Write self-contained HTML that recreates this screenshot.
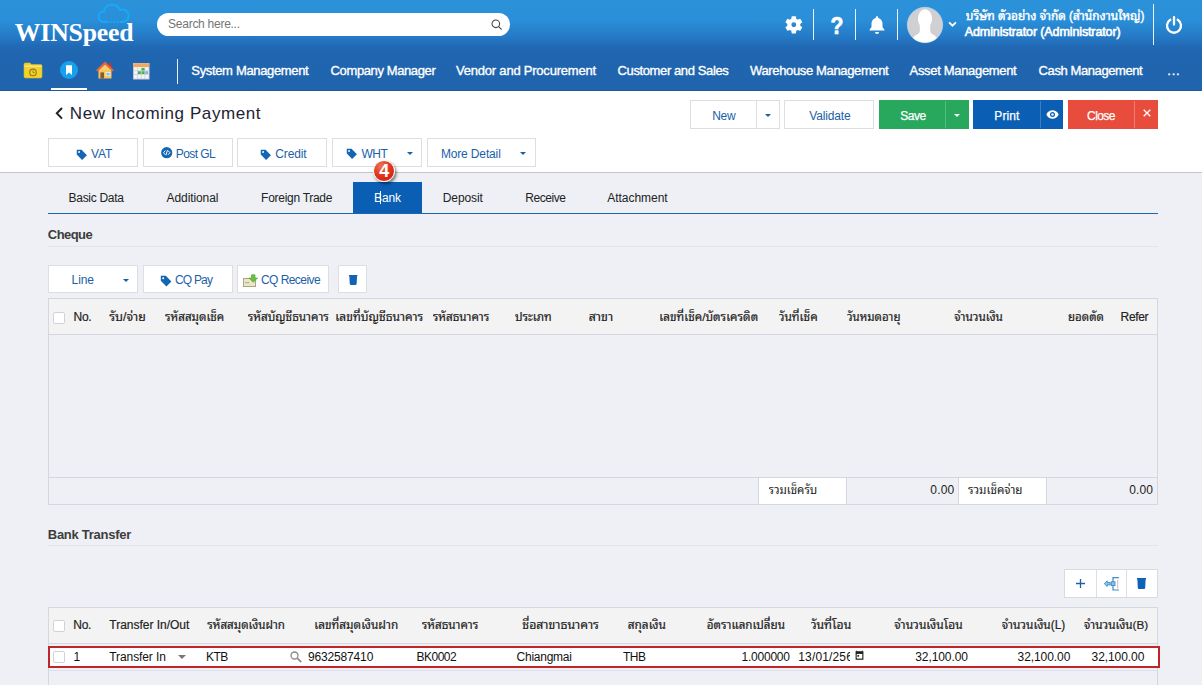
<!DOCTYPE html>
<html lang="th">
<head>
<meta charset="utf-8">
<title>New Incoming Payment</title>
<style>
*{box-sizing:border-box;margin:0;padding:0}
html,body{width:1202px;height:685px;overflow:hidden;background:#eef0f5}
body{font-family:"Liberation Sans","Noto Sans Thai Looped","Sarabun","Loma","Noto Sans Thai",sans-serif;font-size:12px;color:#222;position:relative}
.a{position:absolute}
svg.a{display:block;overflow:visible}
.t{position:absolute;white-space:nowrap;line-height:20px;height:20px}
.t.th{overflow-x:clip;overflow-y:visible}
#hdr{position:absolute;left:0;top:0;width:1202px;height:91px;border-bottom:1px solid #1b5899;background:linear-gradient(#2b92da 0px,#2a8fd8 20px,#257bc8 36px,#216ab5 46px,#2065af 54px,#2064ae 91px)}
#tb{position:absolute;left:0;top:91px;width:1202px;height:82px;background:#fff;border-bottom:1px solid #c6c6c6}
.vd{position:absolute;width:1px;background:#fff;opacity:.9}
.btn{position:absolute;height:29px;border:1px solid #dcdee2;background:#fff}
.btn.g{background:#27a85d;border-color:#27a85d}
.btn.b{background:#0a5fb4;border-color:#0a5fb4}
.btn.r{background:#e74c3c;border-color:#e74c3c}
.sp{position:absolute;width:1px;height:27px;top:101px;background:#dcdee2}
.car{position:absolute;width:0;height:0;border-left:3.5px solid transparent;border-right:3.5px solid transparent;border-top:3.5px solid #1a5fa8}
.hr{position:absolute;left:48px;width:1110px;height:1px;background:#e3e5ea}
.ln{position:absolute;background:#d4d7dd}
.cb{position:absolute;width:12px;height:12px;background:#fff;border:1px solid #cfd2d7;border-radius:2px}
</style>
</head>
<body>
<div id="hdr"></div>
<!-- cloud over logo -->
<svg class="a" style="left:96px;top:2px" width="36" height="24" viewBox="0 0 36 24">
 <path d="M11.500 19.800 H8.500 C4.800 19.800 2.600 17.300 2.600 14.400 C2.600 11.400 5 9.300 8 9.600 C8.300 5.400 11.700 2.600 16 2.600 C19.800 2.600 22.700 4.800 23.900 8 C24.700 7.700 25.500 7.600 26.300 7.600 C30 7.600 32.700 10.300 32.700 13.700 C32.700 17.200 30 19.800 26.600 19.800 H24.500" fill="none" stroke="#17a9f3" stroke-width="2.200" stroke-linecap="round" stroke-linejoin="round"/>
 <g fill="#17a9f3"><circle cx="14.600" cy="19.900" r="1.150"/><circle cx="18" cy="19.900" r="1.150"/><circle cx="21.400" cy="19.900" r="1.150"/></g>
</svg>
<div class="a" style="left:157px;top:13px;width:353px;height:23px;border-radius:12px;background:#fff"></div>
<svg class="a" style="left:490px;top:18px" width="14" height="14" viewBox="0 0 14 14"><circle cx="5.800" cy="5.800" r="3.800" fill="none" stroke="#444" stroke-width="1.050"/><path d="M8.600 8.600 L11.300 11.100" stroke="#444" stroke-width="1.200" stroke-linecap="round"/></svg>

<!-- quick icons -->
<svg class="a" style="left:23px;top:61px" width="20" height="18" viewBox="0 0 20 18">
 <path d="M1 3.200 C1 2.400 1.500 2 2.200 2 H7 L8.600 3.600 H17.600 C18.400 3.600 19 4.100 19 4.900 V15.600 C19 16.400 18.400 17 17.600 17 H2.400 C1.600 17 1 16.400 1 15.600 Z" fill="#f1d12e" stroke="#d9b81f" stroke-width=".6"/>
 <rect x="1.400" y="4.600" width="17.200" height="1.200" fill="#f8ea9a"/>
 <circle cx="10" cy="11.400" r="3.300" fill="#f1d12e" stroke="#9a7a0e" stroke-width="1.100"/><path d="M10 9.600 V11.600 H11.600" fill="none" stroke="#9a7a0e" stroke-width="1"/>
</svg>
<svg class="a" style="left:60px;top:61px" width="18" height="18" viewBox="0 0 18 18"><circle cx="9" cy="9" r="9" fill="#18a0ec"/><path d="M6 4.200 H12 V14 L9 11.600 L6 14 Z" fill="#fff"/></svg>
<svg class="a" style="left:95px;top:60px" width="20" height="20" viewBox="0 0 20 20">
 <rect x="14" y="3" width="2.400" height="5" fill="#c0392b"/>
 <path d="M3.500 10 H16.500 V18.500 H3.500 Z" fill="#f6c458"/>
 <path d="M10 1.600 L19 10.200 L17.400 11.400 L10 4.600 L2.600 11.400 L1 10.200 Z" fill="#ef6238"/>
 <path d="M10 4.600 L16.500 10.600 H3.500 Z" fill="#f8cc66"/>
 <rect x="5.400" y="12.400" width="3.600" height="6.100" fill="#8a5a2b"/>
 <rect x="11" y="12.400" width="4" height="3.400" fill="#7ec3ea" stroke="#fff" stroke-width=".6"/>
</svg>
<svg class="a" style="left:133px;top:63px" width="16.500" height="16.500" viewBox="0 0 18 18">
 <rect x=".5" y=".5" width="17" height="17" fill="#f4f5f7" stroke="#c5c8cf"/>
 <rect x=".5" y=".5" width="17" height="4" fill="#f0a95e"/>
 <path d="M1 8.500 H17 M1 12.500 H17 M5 5 V17 M9 5 V17 M13 5 V17" stroke="#c3c9d4" stroke-width=".8"/>
 <rect x="9.400" y="5.400" width="3.200" height="2.800" fill="#4caf50"/><rect x="5.400" y="9" width="3.200" height="3" fill="#4caf50"/><rect x="9.400" y="9" width="3.200" height="3" fill="#4caf50"/><rect x="13.400" y="9" width="3" height="3" fill="#7fb3e6"/>
</svg>
<div class="a" style="left:51px;top:88px;width:36px;height:2px;background:#fff"></div>
<div class="vd" style="left:177px;top:59px;height:25px"></div>

<!-- right header icons -->
<svg class="a" style="left:783.200px;top:14.100px" width="21.600" height="21.600" viewBox="0 0 24 24"><path fill="#fff" d="M19.140 12.940c.04-.3.06-.61.06-.94 0-.32-.02-.64-.07-.94l2.030-1.580a.49.49 0 0 0 .12-.61l-1.920-3.320a.49.49 0 0 0-.59-.22l-2.390.96c-.5-.38-1.030-.7-1.620-.94l-.36-2.540a.48.48 0 0 0-.48-.41h-3.840c-.24 0-.43.17-.47.41l-.36 2.540c-.59.24-1.130.57-1.620.94l-2.390-.96a.49.49 0 0 0-.59.22L2.740 8.870c-.12.21-.08.47.12.61l2.030 1.580c-.05.3-.09.63-.09.94s.02.64.07.94l-2.030 1.580a.49.49 0 0 0-.12.61l1.920 3.320c.12.22.37.29.59.22l2.390-.96c.5.38 1.030.7 1.620.94l.36 2.540c.05.24.24.41.48.41h3.840c.24 0 .44-.17.47-.41l.36-2.540c.59-.24 1.130-.56 1.620-.94l2.390.96c.22.08.47 0 .59-.22l1.920-3.320c.12-.22.07-.47-.12-.61l-2.010-1.580zM12 14.700A2.700 2.700 0 1 1 12 9.300a2.700 2.700 0 0 1 0 5.400z"/></svg>
<div class="vd" style="left:813px;top:9px;height:31px"></div>
<div class="a" style="left:827.200px;top:11.900px;width:20px;text-align:center;font-weight:bold;font-size:24.500px;line-height:28px;color:#fff;-webkit-text-stroke:.7px #fff;transform:scaleX(.86)">?</div>
<div class="vd" style="left:855px;top:9px;height:31px"></div>
<svg class="a" style="left:868px;top:15px" width="18" height="20" viewBox="0 0 18 20"><path fill="#fff" d="M9 1.200c.7 0 1.200.5 1.200 1.200v.5c2.600.6 4.300 2.800 4.300 5.600v3.600l1.900 2.600v.9H1.600v-.9l1.900-2.600V8.500c0-2.800 1.700-5 4.300-5.600v-.5c0-.7.5-1.200 1.200-1.200zM7 17h4a2 2 0 0 1-4 0z"/></svg>
<div class="vd" style="left:897px;top:9px;height:31px"></div>
<svg class="a" style="left:907px;top:7px" width="36" height="36" viewBox="0 0 36 36">
 <defs><clipPath id="av"><circle cx="18" cy="18" r="17.600"/></clipPath></defs>
 <circle cx="18" cy="18" r="17.700" fill="#d0cfd1" stroke="#b9d9f2" stroke-width=".7"/>
 <g clip-path="url(#av)" fill="#fff"><ellipse cx="18" cy="11.800" rx="7.100" ry="9.500"/><path d="M12.800 17 V24.200 C12.800 26.200 10.200 27.200 7.800 29 C5.700 30.600 4.600 33 4 37 H32 C31.400 33 30.300 30.600 28.200 29 C25.800 27.200 23.200 26.200 23.200 24.200 V17 Z"/></g>
</svg>
<svg class="a" style="left:947.600px;top:21.200px" width="9" height="7" viewBox="0 0 9 7"><path d="M1.100 1.300 L4.500 4.700 L7.900 1.300" fill="none" stroke="#fff" stroke-width="1.900"/></svg>
<div class="vd" style="left:1153px;top:4px;height:41px"></div>
<svg class="a" style="left:1164px;top:15px" width="20" height="20" viewBox="0 0 20 20"><path d="M6.300 4.800 A7 7 0 1 0 13.700 4.800" fill="none" stroke="#fff" stroke-width="2.300" stroke-linecap="round"/><path d="M10 2.200 V9.600" stroke="#fff" stroke-width="2.300" stroke-linecap="round"/></svg>

<!-- toolbar -->
<div id="tb"></div>
<svg class="a" style="left:54px;top:106px" width="10" height="14" viewBox="0 0 10 14"><path d="M8 2 L2.800 7.300 L8 12.600" fill="none" stroke="#222" stroke-width="2"/></svg>

<div class="btn" style="left:690px;top:100px;width:90px"></div><div class="sp" style="left:756px"></div><i class="car" style="left:765px;top:114px"></i>
<div class="btn" style="left:784px;top:100px;width:90px"></div>
<div class="btn g" style="left:879px;top:100px;width:90px"></div><div class="sp" style="left:945px;background:#52bd80"></div><i class="car" style="left:953.500px;top:114px;border-top-color:#fff"></i>
<div class="btn b" style="left:973px;top:100px;width:90px"></div><div class="sp" style="left:1040px;background:#3a7fc6"></div>
<svg class="a" style="left:1046px;top:110px" width="13" height="9" viewBox="0 0 13 9"><path d="M.3 4.500 C1.800 1.600 4 .3 6.500 .3 S11.200 1.600 12.700 4.500 C11.200 7.400 9 8.700 6.500 8.700 S1.800 7.400 .3 4.500Z" fill="#fff"/><circle cx="6.500" cy="4.500" r="2.500" fill="#0a5fb4"/><circle cx="6.500" cy="4.500" r="1.200" fill="#fff"/></svg>
<div class="btn r" style="left:1068px;top:100px;width:90px"></div><div class="sp" style="left:1134px;background:#ef7f73"></div>
<svg class="a" style="left:1142.500px;top:109px" width="8" height="8" viewBox="0 0 8 8"><path d="M.7 .7 L7.300 7.300 M7.300 .7 L.7 7.300" stroke="#fff" stroke-width="1.300"/></svg>

<!-- second row buttons -->
<div class="btn" style="left:48px;top:138px;width:90px"></div>
<div class="btn" style="left:143px;top:138px;width:90px"></div>
<div class="btn" style="left:237px;top:138px;width:90px"></div>
<div class="btn" style="left:332px;top:138px;width:90px"></div><i class="car" style="left:406.500px;top:152px"></i>
<div class="btn" style="left:427px;top:138px;width:109px"></div><i class="car" style="left:520.300px;top:152px"></i>
<svg class="a" style="left:76.300px;top:148.500px" width="11.500" height="11.500" viewBox="0 0 12 12"><path d="M.8 .8 H5.800 L11.400 6.400 L6.400 11.400 L.8 5.800 Z" fill="#1565b5"/><circle cx="3.200" cy="3.200" r="1" fill="#fff"/></svg>
<svg class="a" style="left:161px;top:147px" width="11.400" height="11.400" viewBox="0 0 12 12"><circle cx="6" cy="6" r="5.900" fill="#1565b5"/><path d="M4.600 3.800 L2.600 6 L4.600 8.200 M7.400 3.800 L9.400 6 L7.400 8.200 M6.800 3.400 L5.200 8.600" fill="none" stroke="#fff" stroke-width="1"/></svg>
<svg class="a" style="left:260.300px;top:148.500px" width="11.500" height="11.500" viewBox="0 0 12 12"><path d="M.8 .8 H5.800 L11.400 6.400 L6.400 11.400 L.8 5.800 Z" fill="#1565b5"/><circle cx="3.200" cy="3.200" r="1" fill="#fff"/></svg>
<svg class="a" style="left:346.200px;top:148.300px" width="11.500" height="11.500" viewBox="0 0 12 12"><path d="M.8 .8 H5.800 L11.400 6.400 L6.400 11.400 L.8 5.800 Z" fill="#1565b5"/><circle cx="3.200" cy="3.200" r="1" fill="#fff"/></svg>

<!-- tabs -->
<div class="a" style="left:353px;top:182px;width:69px;height:32px;background:#0a5fb4"></div>
<div class="a" style="left:48px;top:213px;width:1110px;height:1px;background:#1b67ab"></div>
<div class="a" style="left:380px;top:191px;width:1px;height:13px;background:#fff"></div>
<div class="a" style="left:373px;top:160px;width:22px;height:22px;border-radius:11px;background:radial-gradient(circle at 35% 25%,#ec7358 0,#e2381f 45%,#dd2414 70%,#c5261a 100%);border:1.500px solid #f6f6f6;box-shadow:1.500px 2px 3px rgba(0,0,0,.5);color:#fff;font-weight:bold;font-size:18px;line-height:20.500px;text-align:center;text-indent:.5px">4</div>

<!-- Cheque -->
<div class="hr" style="top:246px"></div>
<div class="btn" style="left:48px;top:265px;width:90px;height:28px"></div><i class="car" style="left:122.500px;top:279px"></i>
<div class="btn" style="left:143px;top:265px;width:90px;height:28px"></div>
<div class="btn" style="left:237px;top:265px;width:92px;height:28px"></div>
<div class="btn" style="left:338px;top:265px;width:29px;height:28px"></div>
<svg class="a" style="left:160px;top:275px" width="12" height="12" viewBox="0 0 12 12"><path d="M.8 .8 H5.800 L11.400 6.400 L6.400 11.400 L.8 5.800 Z" fill="#1565b5"/><circle cx="3.200" cy="3.200" r="1" fill="#fff"/></svg>
<svg class="a" style="left:243px;top:274px" width="15" height="13" viewBox="0 0 15 13"><rect x=".5" y="4.500" width="12" height="8" fill="#ebe6c6" stroke="#aaa57e"/><rect x="2" y="8" width="4.500" height="1.200" fill="#b9b38a"/><path d="M8.500 .8 H12 V4 H14.500 L10.250 8.300 L6 4 H8.500 Z" fill="#6cc13f" stroke="#4a9e2a" stroke-width=".6"/></svg>
<svg class="a" style="left:348.500px;top:274.900px" width="8.400" height="9.900" viewBox="0 0 9 11" preserveAspectRatio="none"><path d="M0 0 H9 V1.500 H8.600 L8.200 9.800 Q8.100 11 7 11 H2 Q.9 11 .8 9.800 L.4 1.500 H0 Z" fill="#0f62b5"/></svg>

<div class="a" style="left:48px;top:298px;width:1110px;height:207px;border:1px solid #d4d7dd"></div>
<div class="a" style="left:49px;top:299px;width:1108px;height:35px;background:#f3f3f3"></div>
<div class="ln" style="left:49px;top:334px;width:1108px;height:1px"></div>
<div class="ln" style="left:49px;top:477px;width:1108px;height:1px"></div>
<div class="cb" style="left:53px;top:311.500px"></div>
<div class="a" style="left:758px;top:478px;width:89px;height:26px;background:#fff;border-left:1px solid #d4d7dd;border-right:1px solid #d4d7dd"></div>
<div class="a" style="left:958px;top:478px;width:89px;height:26px;background:#fff;border-left:1px solid #d4d7dd;border-right:1px solid #d4d7dd"></div>

<!-- Bank Transfer -->
<div class="hr" style="top:545px"></div>
<div class="btn" style="left:1064px;top:569px;width:94px;height:29px;border-color:#d9dbe0"></div>
<div class="ln" style="left:1096px;top:570px;width:1px;height:27px;background:#dcdee3"></div>
<div class="ln" style="left:1126px;top:570px;width:1px;height:27px;background:#dcdee3"></div>
<svg class="a" style="left:1075.800px;top:579px" width="9" height="9" viewBox="0 0 9 9"><path d="M4.500 0 V9 M0 4.500 H9" stroke="#1a62a8" stroke-width="1.300"/></svg>
<svg class="a" style="left:1104px;top:577px" width="16" height="14" viewBox="0 0 16 14">
 <path d="M14.900 .7 H9 V13 H14.900" fill="none" stroke="#3c8cc8" stroke-width="1.200"/>
 <path d="M13.700 2.500 V11.500" stroke="#c79a9a" stroke-width=".7"/>
 <rect x="7.200" y="4.800" width="3.800" height="3.800" fill="#8cc6f0" stroke="#2f7fc4" stroke-width=".8"/>
 <path d="M.3 6.700 L3.200 3.900 V5.500 H6.200 V7.900 H3.200 V9.500 Z" fill="#8cc6f0" stroke="#2f7fc4" stroke-width=".8" stroke-linejoin="round"/>
</svg>
<svg class="a" style="left:1137.300px;top:578px" width="9" height="11" viewBox="0 0 9 11"><path d="M0 0 H9 V1.500 H8.600 L8.200 9.800 Q8.100 11 7 11 H2 Q.9 11 .8 9.800 L.4 1.500 H0 Z" fill="#0f62b5"/></svg>

<div class="a" style="left:48px;top:607px;width:1110px;height:90px;border:1px solid #d4d7dd"></div>
<div class="a" style="left:49px;top:608px;width:1108px;height:35px;background:#f3f3f3"></div>
<div class="ln" style="left:49px;top:643px;width:1108px;height:1px"></div>
<div class="cb" style="left:53px;top:620px"></div>
<div class="ln" style="left:49px;top:670px;width:1108px;height:1px;background:#dfe1e6"></div>
<div class="a" style="left:48px;top:646px;width:1112px;height:22px;background:#fff;border:2px solid #bf262c"></div>
<div class="cb" style="left:53px;top:651px"></div>
<div class="a" style="left:177.700px;top:655.300px;width:0;height:0;border-left:4px solid transparent;border-right:4px solid transparent;border-top:4px solid #777"></div>
<svg class="a" style="left:290px;top:651px" width="12" height="12" viewBox="0 0 12 12"><circle cx="4.500" cy="4.500" r="3.500" fill="none" stroke="#8a8a8a" stroke-width="1.300"/><path d="M7.200 7.200 L11.200 11.200" stroke="#8a8a8a" stroke-width="1.700"/></svg>
<svg class="a" style="left:855.300px;top:650px" width="9" height="10.200" viewBox="0 0 9 10"><path d="M1.600 0 L2.300 1.200 H6.700 L7.400 0 V1.200 H8.400 V9.600 H.6 V1.200 H1.600 Z" fill="#1a1a1a"/><rect x="1.700" y="3.800" width="5.600" height="4.700" fill="#fff"/><rect x="2.400" y="5" width="1.700" height="1.600" fill="#1a1a1a"/></svg>

<!-- text -->
<div class="t" style="left:14.8px;top:22.8px;font-size:25.7px;color:#fff;font-weight:bold;font-family:'Liberation Serif',serif;letter-spacing:-0.168px;">WINSpeed</div>
<div class="t" style="left:168.1px;top:14.0px;font-size:12px;color:#757575;letter-spacing:-0.266px;">Search here...</div>
<div class="t" style="left:191.3px;top:61.0px;font-size:13px;color:#fff;-webkit-text-stroke:0.35px #fff;letter-spacing:-0.338px;">System Management</div>
<div class="t" style="left:330.6px;top:61.0px;font-size:13px;color:#fff;-webkit-text-stroke:0.35px #fff;letter-spacing:-0.388px;">Company Manager</div>
<div class="t" style="left:456.1px;top:61.0px;font-size:13px;color:#fff;-webkit-text-stroke:0.35px #fff;letter-spacing:-0.220px;">Vendor and Procurement</div>
<div class="t" style="left:617.6px;top:61.0px;font-size:13px;color:#fff;-webkit-text-stroke:0.35px #fff;letter-spacing:-0.391px;">Customer and Sales</div>
<div class="t" style="left:750.0px;top:61.0px;font-size:13px;color:#fff;-webkit-text-stroke:0.35px #fff;letter-spacing:-0.356px;">Warehouse Management</div>
<div class="t" style="left:909.6px;top:61.0px;font-size:13px;color:#fff;-webkit-text-stroke:0.35px #fff;letter-spacing:-0.326px;">Asset Management</div>
<div class="t" style="left:1038.6px;top:61.0px;font-size:13px;color:#fff;-webkit-text-stroke:0.35px #fff;letter-spacing:-0.408px;">Cash Management</div>
<div class="t" style="left:1167.3px;top:61.0px;font-size:13px;color:#fff;-webkit-text-stroke:0.35px #fff;letter-spacing:0.793px;">...</div>
<div class="t th" style="left:965.8px;top:6.0px;width:181.7px;font-size:11.85px;color:#fff;-webkit-text-stroke:0.4px #fff;">บริษัท ตัวอย่าง จำกัด (สำนักงานใหญ่)</div>
<div class="t" style="left:964.8px;top:22.0px;font-size:12.5px;color:#fff;-webkit-text-stroke:0.6px #fff;letter-spacing:-0.114px;">Administrator (Administrator)</div>
<div class="t" style="left:69.8px;top:103.7px;font-size:17px;color:#1d2433;letter-spacing:0.592px;">New Incoming Payment</div>
<div class="t" style="left:712.3px;top:105.5px;font-size:12px;color:#1a5fa8;letter-spacing:-0.348px;">New</div>
<div class="t" style="left:809.3px;top:105.5px;font-size:12px;color:#1a5fa8;letter-spacing:-0.166px;">Validate</div>
<div class="t" style="left:900.3px;top:105.5px;font-size:12px;color:#fff;-webkit-text-stroke:0.25px #fff;letter-spacing:-0.513px;">Save</div>
<div class="t" style="left:994.3px;top:105.5px;font-size:12px;color:#fff;-webkit-text-stroke:0.25px #fff;letter-spacing:0.083px;">Print</div>
<div class="t" style="left:1087.1px;top:105.5px;font-size:12px;color:#fff;-webkit-text-stroke:0.25px #fff;letter-spacing:-0.592px;">Close</div>
<div class="t" style="left:91.0px;top:144.0px;font-size:12px;color:#1a5fa8;letter-spacing:-0.121px;">VAT</div>
<div class="t" style="left:175.8px;top:144.0px;font-size:12px;color:#1a5fa8;letter-spacing:-0.590px;">Post GL</div>
<div class="t" style="left:275.3px;top:144.0px;font-size:12px;color:#1a5fa8;letter-spacing:-0.139px;">Credit</div>
<div class="t" style="left:361.5px;top:144.0px;font-size:12px;color:#1a5fa8;letter-spacing:-0.454px;">WHT</div>
<div class="t" style="left:440.9px;top:144.0px;font-size:12px;color:#1a5fa8;letter-spacing:-0.144px;">More Detail</div>
<div class="t" style="left:68.6px;top:188.0px;font-size:12px;color:#222;letter-spacing:-0.301px;">Basic Data</div>
<div class="t" style="left:166.6px;top:188.0px;font-size:12px;color:#222;letter-spacing:-0.100px;">Additional</div>
<div class="t" style="left:261.1px;top:188.0px;font-size:12px;color:#222;letter-spacing:-0.283px;">Foreign Trade</div>
<div class="t" style="left:374.1px;top:188.0px;font-size:12px;color:#fff;letter-spacing:-0.146px;">Bank</div>
<div class="t" style="left:442.8px;top:188.0px;font-size:12px;color:#222;letter-spacing:-0.111px;">Deposit</div>
<div class="t" style="left:525.3px;top:188.0px;font-size:12px;color:#222;letter-spacing:-0.440px;">Receive</div>
<div class="t" style="left:607.3px;top:188.0px;font-size:12px;color:#222;letter-spacing:-0.043px;">Attachment</div>
<div class="t" style="left:47.8px;top:225.2px;font-size:13px;color:#3d3d3d;font-weight:bold;letter-spacing:-0.548px;">Cheque</div>
<div class="t" style="left:71.6px;top:270.0px;font-size:12px;color:#1a5fa8;letter-spacing:-0.122px;">Line</div>
<div class="t" style="left:175.0px;top:270.0px;font-size:12px;color:#1a5fa8;letter-spacing:-0.819px;">CQ Pay</div>
<div class="t" style="left:261.0px;top:270.0px;font-size:12px;color:#1a5fa8;letter-spacing:-0.563px;">CQ Receive</div>
<div class="t" style="left:73.6px;top:307.0px;font-size:12px;color:#222;-webkit-text-stroke:0.18px #222;letter-spacing:-0.334px;">No.</div>
<div class="t th" style="left:109.3px;top:307.0px;width:39.4px;font-size:12.3px;color:#222;-webkit-text-stroke:0.18px #222;">รับ/จ่าย</div>
<div class="t th" style="left:165.0px;top:307.0px;width:62.3px;font-size:11.67px;color:#222;-webkit-text-stroke:0.18px #222;">รหัสสมุดเช็ค</div>
<div class="t th" style="left:247.7px;top:307.0px;width:84.3px;font-size:11.76px;color:#222;-webkit-text-stroke:0.18px #222;">รหัสบัญชีธนาคาร</div>
<div class="t th" style="left:335.3px;top:307.0px;width:91.0px;font-size:12.01px;color:#222;-webkit-text-stroke:0.18px #222;">เลขที่บัญชีธนาคาร</div>
<div class="t th" style="left:432.7px;top:307.0px;width:59.6px;font-size:11.71px;color:#222;-webkit-text-stroke:0.18px #222;">รหัสธนาคาร</div>
<div class="t th" style="left:515.0px;top:307.0px;width:39.7px;font-size:11.72px;color:#222;-webkit-text-stroke:0.18px #222;">ประเภท</div>
<div class="t th" style="left:588.7px;top:307.0px;width:27.6px;font-size:12.4px;color:#222;-webkit-text-stroke:0.18px #222;">สาขา</div>
<div class="t th" style="left:659.3px;top:307.0px;width:102.0px;font-size:11.78px;color:#222;-webkit-text-stroke:0.18px #222;">เลขที่เช็ค/บัตรเครดิต</div>
<div class="t th" style="left:778.7px;top:307.0px;width:42.0px;font-size:11.87px;color:#222;-webkit-text-stroke:0.18px #222;">วันที่เช็ค</div>
<div class="t th" style="left:847.0px;top:307.0px;width:56.3px;font-size:11.5px;color:#222;-webkit-text-stroke:0.18px #222;">วันหมดอายุ</div>
<div class="t th" style="left:954.3px;top:307.0px;width:51.7px;font-size:11.79px;color:#222;-webkit-text-stroke:0.18px #222;">จำนวนเงิน</div>
<div class="t th" style="left:1068.0px;top:307.0px;width:37.7px;font-size:11.5px;color:#222;-webkit-text-stroke:0.18px #222;">ยอดตัด</div>
<div class="t" style="left:1120.6px;top:307.0px;font-size:12px;color:#222;-webkit-text-stroke:0.18px #222;letter-spacing:-0.331px;">Refer</div>
<div class="t th" style="left:768.6px;top:480.3px;width:50.6px;font-size:11.5px;color:#222;">รวมเช็ครับ</div>
<div class="t th" style="left:968.0px;top:480.3px;width:57.6px;font-size:11.67px;color:#222;">รวมเช็คจ่าย</div>
<div class="t" style="left:930.3px;top:480.0px;font-size:12px;color:#222;letter-spacing:0.187px;">0.00</div>
<div class="t" style="left:1129.3px;top:480.0px;font-size:12px;color:#222;letter-spacing:0.054px;">0.00</div>
<div class="t" style="left:47.8px;top:525.0px;font-size:13px;color:#3d3d3d;font-weight:bold;letter-spacing:-0.273px;">Bank Transfer</div>
<div class="t" style="left:73.3px;top:615.0px;font-size:12px;color:#222;-webkit-text-stroke:0.18px #222;letter-spacing:-0.334px;">No.</div>
<div class="t" style="left:109.3px;top:615.0px;font-size:12px;color:#222;-webkit-text-stroke:0.18px #222;letter-spacing:-0.016px;">Transfer In/Out</div>
<div class="t th" style="left:207.3px;top:615.0px;width:80.7px;font-size:11.61px;color:#222;-webkit-text-stroke:0.18px #222;">รหัสสมุดเงินฝาก</div>
<div class="t th" style="left:314.3px;top:615.0px;width:87.0px;font-size:11.82px;color:#222;-webkit-text-stroke:0.18px #222;">เลขที่สมุดเงินฝาก</div>
<div class="t th" style="left:421.7px;top:615.0px;width:59.6px;font-size:11.71px;color:#222;-webkit-text-stroke:0.18px #222;">รหัสธนาคาร</div>
<div class="t th" style="left:522.3px;top:615.0px;width:79.7px;font-size:12.29px;color:#222;-webkit-text-stroke:0.18px #222;">ชื่อสาขาธนาคาร</div>
<div class="t th" style="left:627.7px;top:615.0px;width:41.3px;font-size:11.9px;color:#222;-webkit-text-stroke:0.18px #222;">สกุลเงิน</div>
<div class="t th" style="left:706.7px;top:615.0px;width:81.3px;font-size:11.68px;color:#222;-webkit-text-stroke:0.18px #222;">อัตราแลกเปลี่ยน</div>
<div class="t th" style="left:810.7px;top:615.0px;width:43.6px;font-size:12.16px;color:#222;-webkit-text-stroke:0.18px #222;">วันที่โอน</div>
<div class="t th" style="left:894.3px;top:615.0px;width:71.4px;font-size:11.98px;color:#222;-webkit-text-stroke:0.18px #222;">จำนวนเงินโอน</div>
<div class="t th" style="left:1001.7px;top:615.0px;width:66.6px;font-size:11.88px;color:#222;-webkit-text-stroke:0.18px #222;">จำนวนเงิน(L)</div>
<div class="t th" style="left:1084.0px;top:615.0px;width:67.3px;font-size:11.77px;color:#222;-webkit-text-stroke:0.18px #222;">จำนวนเงิน(B)</div>
<div class="t" style="left:73.6px;top:647.0px;font-size:12px;color:#111;">1</div>
<div class="t" style="left:109.3px;top:647.0px;font-size:12px;color:#111;letter-spacing:-0.096px;">Transfer In</div>
<div class="t" style="left:206.0px;top:647.0px;font-size:12px;color:#111;letter-spacing:-0.512px;">KTB</div>
<div class="t" style="left:308.0px;top:647.0px;font-size:12px;color:#111;letter-spacing:-0.159px;">9632587410</div>
<div class="t" style="left:416.6px;top:647.0px;font-size:12px;color:#111;letter-spacing:-0.537px;">BK0002</div>
<div class="t" style="left:516.6px;top:647.0px;font-size:12px;color:#111;letter-spacing:-0.257px;">Chiangmai</div>
<div class="t" style="left:623.0px;top:647.0px;font-size:12px;color:#111;letter-spacing:-0.540px;">THB</div>
<div class="t" style="left:741.6px;top:647.0px;font-size:12px;color:#111;letter-spacing:-0.249px;">1.000000</div>
<div class="t" style="left:798.3px;top:647.0px;width:51.6px;overflow:hidden;font-size:12px;color:#111;letter-spacing:0.140px;">13/01/2566</div>
<div class="t" style="left:915.3px;top:647.0px;font-size:12px;color:#111;letter-spacing:-0.096px;">32,100.00</div>
<div class="t" style="left:1017.6px;top:647.0px;font-size:12px;color:#111;letter-spacing:-0.084px;">32,100.00</div>
<div class="t" style="left:1091.6px;top:647.0px;font-size:12px;color:#111;letter-spacing:-0.084px;">32,100.00</div>
</body>
</html>
